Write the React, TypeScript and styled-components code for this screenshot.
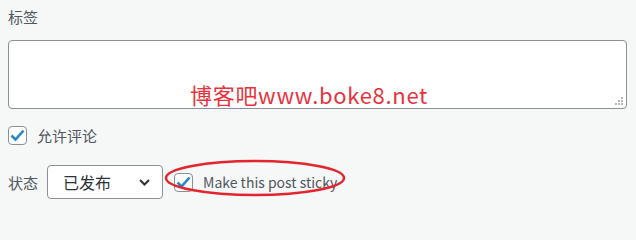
import React from 'react';
import styled, { createGlobalStyle } from 'styled-components';

const GlobalStyle = createGlobalStyle`
  html, body {
    margin: 0;
    background: #f6f7f7;
  }
  body {
    font-family: "Noto Sans CJK SC", "Noto Sans", sans-serif;
    color: #50575e;
  }
`;

const Panel = styled.section`
  position: relative;
  padding: 7px 8px 0 8px;
  width: 636px;
  height: 207px;
  box-sizing: border-box;
  overflow: hidden;
`;

const FieldLabel = styled.div`
  font-size: 15px;
  line-height: 20px;
  margin-bottom: 13px;
`;

const TagsBox = styled.div`
  width: 619px;
  height: 69px;
  box-sizing: border-box;
  border: 1px solid #8c8f94;
  border-radius: 4px;
  background: #fff;
  position: relative;
`;

const Grip = styled.svg`
  position: absolute;
  right: 2px;
  bottom: 2px;
`;

const Watermark = styled.span`
  position: absolute;
  left: 190px;
  top: 79px;
  font-family: "Noto Sans CJK SC", sans-serif;
  font-size: 22px;
  letter-spacing: 0.7px;
  line-height: 30px;
  color: #e8333e;
  white-space: nowrap;
`;

const Row = styled.div<{ $top: number }>`
  display: flex;
  align-items: center;
  margin-top: ${(p) => p.$top}px;
  font-size: 15px;
`;

const CheckLabel = styled.label<{ $latin?: boolean }>`
  position: relative;
  display: flex;
  align-items: center;
  gap: 10px;
  font-size: ${(p) => (p.$latin ? 14 : 15)}px;
`;

const Box = styled.span`
  width: 19px;
  height: 19px;
  box-sizing: border-box;
  border: 1px solid #8c8f94;
  border-radius: 4px;
  background: #fff;
  display: flex;
  align-items: center;
  justify-content: center;
`;

const StatusLabel = styled.span`
  margin-right: 9px;
`;

const Select = styled.div`
  width: 116px;
  height: 34px;
  box-sizing: border-box;
  border: 1px solid #8c8f94;
  border-radius: 4px;
  background: #fff;
  display: flex;
  align-items: center;
  justify-content: space-between;
  padding: 0 12px 0 15px;
  font-size: 16px;
  color: #2c3338;
  margin-right: 11px;
`;

const Ring = styled.svg`
  position: absolute;
  left: -10px;
  top: -13px;
  pointer-events: none;
`;

const Check = () => (
  <Box>
    <svg width="15" height="13" viewBox="0 0 15 13">
      <path d="M1.5 6.5 L5.5 10.5 L13.5 1.5" fill="none" stroke="#2b86c6" strokeWidth="2.6" />
    </svg>
  </Box>
);

const App: React.FC = () => {
  return (
    <>
      <GlobalStyle />
      <Panel>
        <FieldLabel>标签</FieldLabel>
        <TagsBox>
          <Grip width="10" height="10" viewBox="0 0 10 10">
            <rect x="7" y="1" width="2" height="2" fill="#b7b7b7" />
            <rect x="4" y="4" width="2" height="2" fill="#b7b7b7" />
            <rect x="7" y="4" width="2" height="2" fill="#b7b7b7" />
            <rect x="1" y="7" width="2" height="2" fill="#b7b7b7" />
            <rect x="4" y="7" width="2" height="2" fill="#b7b7b7" />
            <rect x="7" y="7" width="2" height="2" fill="#b7b7b7" />
          </Grip>
        </TagsBox>
        <Row $top={16}>
          <CheckLabel>
            <Check />
            允许评论
          </CheckLabel>
        </Row>
        <Row $top={19}>
          <StatusLabel>状态</StatusLabel>
          <Select>
            已发布
            <svg width="11" height="7" viewBox="0 0 11 7">
              <path d="M1 1 L5.5 5.5 L10 1" fill="none" stroke="#2c3338" strokeWidth="2" />
            </svg>
          </Select>
          <CheckLabel $latin>
            <Check />
            Make this post sticky
            <Ring width="182" height="38" viewBox="0 0 182 38">
              <ellipse cx="91" cy="19" rx="89" ry="17" fill="none" stroke="#e2262f" strokeWidth="2.5" />
            </Ring>
          </CheckLabel>
        </Row>
        <Watermark>博客吧www.boke8.net</Watermark>
      </Panel>
    </>
  );
};

export default App;
